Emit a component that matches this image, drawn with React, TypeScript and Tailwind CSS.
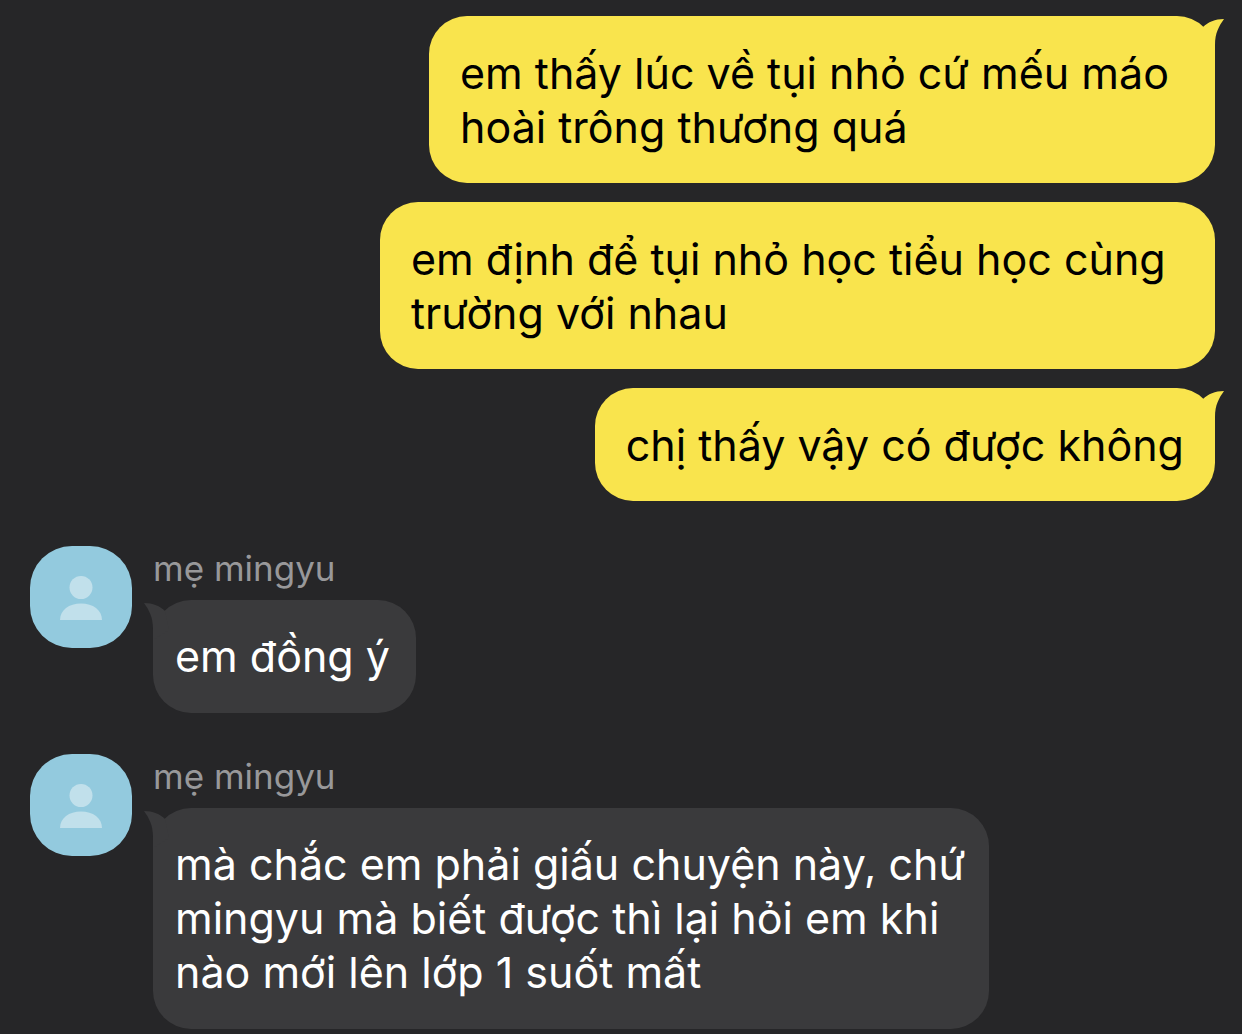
import * as React from 'react';
import clsx from 'clsx';

type Message = {
  text: string;
  sender?: string;
  tail?: boolean;
  className?: string;
};

const sentMessages: Message[] = [
  { text: "em thấy lúc về tụi nhỏ cứ mếu máo hoài trông thương quá", tail: true, className: "max-w-[786px]" },
  { text: "em định để tụi nhỏ học tiểu học cùng trường với nhau", className: "max-w-[835px]" },
  { text: "chị thấy vậy có được không", tail: true, className: "max-w-[835px]" },
];

const receivedMessages: Message[] = [
  { sender: "mẹ mingyu", text: "em đồng ý", className: "pr-[26px]" },
  {
    sender: "mẹ mingyu",
    text: "mà chắc em phải giấu chuyện này, chứ mingyu mà biết được thì lại hỏi em khi nào mới lên lớp 1 suốt mất",
    className: "max-w-[836px] pr-4",
  },
];

function Tail({ className }: { className: string }) {
  return (
    <svg width="31" height="40" viewBox="0 0 31 40" fill="currentColor" aria-hidden="true" className={clsx("absolute top-0", className)}>
      <path d="M10 11 C15 6 22 3 31 3 C26 10 22 17 22 29 L22 40 L6 30 Z" />
    </svg>
  );
}

function Avatar() {
  return (
    <div className="size-[102px] shrink-0 overflow-hidden rounded-[42px] bg-[#93cade]">
      <svg viewBox="0 0 102 102" fill="#c1e0eb" aria-hidden="true">
        <circle cx="51" cy="41.500" r="11.500" />
        <path d="M30 74 C30 64 39 57.500 51 57.500 C63 57.500 72 64 72 74 Z" />
      </svg>
    </div>
  );
}

export default function App() {
  return (
    <main className="min-h-screen bg-[#262628] pt-4 pr-[27px] pb-1 pl-[30px] font-['Inter','Liberation_Sans',sans-serif] text-[43px] leading-[54px]">
      {/* Sent */}
      <div className="flex flex-col items-end gap-[19px]">
        {sentMessages.map((message) => (
          <div
            key={message.text}
            className={clsx("relative rounded-[38px] bg-[#f9e44d] px-[31px] pt-[30px] pb-[29px] text-black", message.className)}
          >
            {message.tail && <Tail className="-right-[9px] text-[#f9e44d]" />}
            <p>{message.text}</p>
          </div>
        ))}
      </div>

      {/* Received */}
      <div className="mt-[45px] flex flex-col gap-[41px]">
        {receivedMessages.map((message) => (
          <div key={message.text} className="flex items-start gap-[21px]">
            <Avatar />
            <div className="flex flex-col items-start gap-[10px]">
              <span className="text-[35px] leading-[44px] text-[#98989a]">{message.sender}</span>
              <div className={clsx("relative rounded-[38px] bg-[#3a3a3c] pt-[29px] pb-[30px] pl-[22px] text-white", message.className)}>
                <Tail className="-left-[9px] -scale-x-100 text-[#3a3a3c]" />
                <p>{message.text}</p>
              </div>
            </div>
          </div>
        ))}
      </div>
    </main>
  );
}
